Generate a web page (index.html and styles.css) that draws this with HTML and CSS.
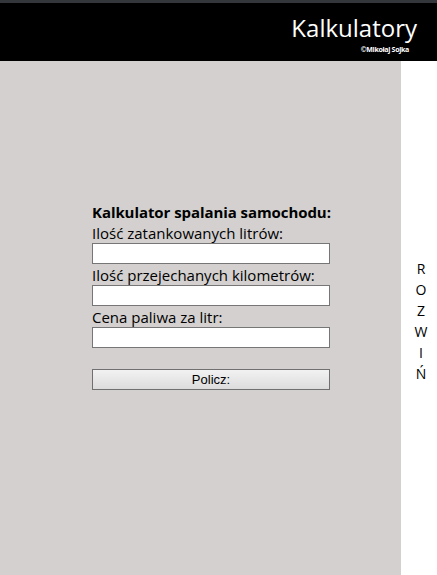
FILE: index.html
```html
<!DOCTYPE html>
<html lang="pl">
<head>
<meta charset="utf-8">
<link rel="stylesheet" href="styles.css">
</head>
<body>
<div class="topline"></div>
<header class="header">
  <h1 class="title">Kalkulatory</h1>
  <div class="author">©Mikołaj Sojka</div>
</header>
<div class="main">
  <section class="panel">
    <form class="calc">
      <div class="calc-title">Kalkulator spalania samochodu:</div>
      <label class="lbl">Ilość zatankowanych litrów:</label>
      <input class="field" type="text">
      <label class="lbl">Ilość przejechanych kilometrów:</label>
      <input class="field" type="text">
      <label class="lbl">Cena paliwa za litr:</label>
      <input class="field" type="text">
      <button class="btn" type="button">Policz:</button>
    </form>
  </section>
  <aside class="side">
    <div class="vtext"><span>R</span><span>O</span><span>Z</span><span>W</span><span>I</span><span>Ń</span></div>
  </aside>
</div>
</body>
</html>
```
FILE: styles.css
```css
html, body { margin: 0; padding: 0; height: 100%; }
body { font-family: "Open Sans", "Noto Sans", sans-serif; background: #fff; display: flex; flex-direction: column; }
.topline { height: 3px; background: #33373b; }
.header { background: #000; color: #fff; height: 58px; box-sizing: border-box; padding: 10px 20px 0 0; display: flex; flex-direction: column; align-items: flex-end; }
.title { margin: 0; font-weight: 400; font-size: 24px; line-height: 30px; }
.author { font-size: 7px; font-weight: 700; line-height: 10px; letter-spacing: -0.3px; margin-right: 8px; margin-top: 2px; }
.main { flex: 1; display: flex; }
.panel { width: 401px; background: #d3d0cf; display: flex; justify-content: center; align-items: flex-start; }
.calc { width: 238px; margin-top: 141px; margin-left: 21px; display: flex; flex-direction: column; }
.calc-title { font-weight: 700; font-size: 15px; line-height: 21px; letter-spacing: -0.07px; white-space: nowrap; color: #000; }
.lbl { font-size: 15px; line-height: 20px; color: #000; white-space: nowrap; }
.field { height: 21px; box-sizing: border-box; border: 1px solid #767676; background: #fff; margin: 0 0 1px 0; padding: 0; }
.btn { margin-top: 20px; height: 21px; border: 1px solid #707070; background: linear-gradient(#f2f2f2, #dcdcdc); font-family: "Liberation Sans", Arial, sans-serif; font-size: 13px; color: #000; padding: 0; }
.side { flex: 1; display: flex; justify-content: center; align-items: flex-start; padding-left: 4px; }
.vtext { margin-top: 197px; display: flex; flex-direction: column; align-items: center; font-size: 14px; line-height: 21px; color: #000; }
```
